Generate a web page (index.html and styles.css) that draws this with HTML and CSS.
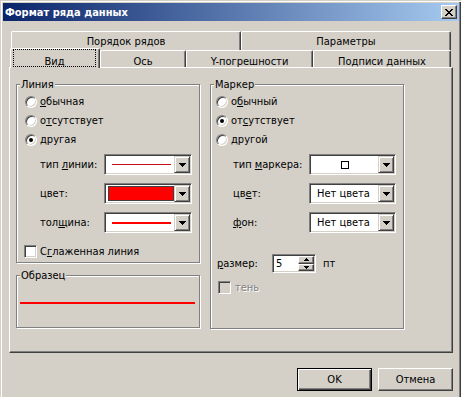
FILE: index.html
```html
<!DOCTYPE html>
<html lang="ru">
<head>
    <meta charset="UTF-8" />
    <title>Формат ряда данных</title>
    <link rel="stylesheet" href="styles.css">
</head>
<body>
    <div class="window">
        <div class="titlebar">
            <span class="title">Формат ряда данных</span>
            <div class="close-btn">
                <svg width="8" height="7" viewBox="0 0 8 7" shape-rendering="crispEdges"><path d="M0 0h2v1H0zM6 0h2v1H6zM1 1h2v1H1zM5 1h2v1H5zM2 2h4v1H2zM3 3h2v1H3zM2 4h4v1H2zM1 5h2v1H1zM5 5h2v1H5zM0 6h2v1H0zM6 6h2v1H6z" fill="#000"/></svg>
            </div>
        </div>

        <div class="client">
            <div class="tabs tabs-back">
                <div class="tab tab-order">Порядок рядов</div>
                <div class="tab tab-params">Параметры</div>
            </div>
            <div class="tabs tabs-front">
                <div class="tab tab-view active"><div class="focus">Вид</div></div>
                <div class="tab tab-axis">Ось</div>
                <div class="tab tab-errors">Y-погрешности</div>
                <div class="tab tab-labels">Подписи данных</div>
            </div>

            <div class="panel">
                <div class="column">
                    <div class="group group-line">
                        <div class="group-title">Линия</div>
                        <div class="options">
                            <div class="option"><span class="radio"></span><span><u>о</u>бычная</span></div>
                            <div class="option"><span class="radio"></span><span>о<u>т</u>сутствует</span></div>
                            <div class="option"><span class="radio checked"></span><span>другая</span></div>
                        </div>
                        <div class="fields">
                            <div class="field">
                                <span class="label">тип <u>л</u>инии:</span>
                                <div class="combo">
                                    <div class="combo-value"><div class="thin-line"></div></div>
                                    <div class="dropdown"><svg width="7" height="4" viewBox="0 0 7 4" shape-rendering="crispEdges"><path d="M0 0H7V1H6V2H5V3H4V4H3V3H2V2H1V1H0Z"/></svg></div>
                                </div>
                            </div>
                            <div class="field">
                                <span class="label">цвет:</span>
                                <div class="combo">
                                    <div class="combo-value"><div class="swatch"></div></div>
                                    <div class="dropdown"><svg width="7" height="4" viewBox="0 0 7 4" shape-rendering="crispEdges"><path d="M0 0H7V1H6V2H5V3H4V4H3V3H2V2H1V1H0Z"/></svg></div>
                                </div>
                            </div>
                            <div class="field">
                                <span class="label">тол<u>щ</u>ина:</span>
                                <div class="combo">
                                    <div class="combo-value"><div class="thick-line"></div></div>
                                    <div class="dropdown"><svg width="7" height="4" viewBox="0 0 7 4" shape-rendering="crispEdges"><path d="M0 0H7V1H6V2H5V3H4V4H3V3H2V2H1V1H0Z"/></svg></div>
                                </div>
                            </div>
                        </div>
                        <div class="check-row"><span class="checkbox"></span><span>С<u>г</u>лаженная линия</span></div>
                    </div>

                    <div class="group group-sample">
                        <div class="group-title">Образец</div>
                        <div class="sample-line"></div>
                    </div>
                </div>

                <div class="group group-marker">
                    <div class="group-title">Маркер</div>
                    <div class="options">
                        <div class="option"><span class="radio"></span><span>о<u>б</u>ычный</span></div>
                        <div class="option"><span class="radio checked"></span><span>от<u>с</u>утствует</span></div>
                        <div class="option"><span class="radio"></span><span>другой</span></div>
                    </div>
                    <div class="fields">
                        <div class="field">
                            <span class="label">тип <u>м</u>аркера:</span>
                            <div class="combo">
                                <div class="combo-value centered"><div class="marker-square"></div></div>
                                <div class="dropdown"><svg width="7" height="4" viewBox="0 0 7 4" shape-rendering="crispEdges"><path d="M0 0H7V1H6V2H5V3H4V4H3V3H2V2H1V1H0Z"/></svg></div>
                            </div>
                        </div>
                        <div class="field">
                            <span class="label">цв<u>е</u>т:</span>
                            <div class="combo">
                                <div class="combo-value">Нет цвета</div>
                                <div class="dropdown"><svg width="7" height="4" viewBox="0 0 7 4" shape-rendering="crispEdges"><path d="M0 0H7V1H6V2H5V3H4V4H3V3H2V2H1V1H0Z"/></svg></div>
                            </div>
                        </div>
                        <div class="field">
                            <span class="label"><u>ф</u>он:</span>
                            <div class="combo">
                                <div class="combo-value">Нет цвета</div>
                                <div class="dropdown"><svg width="7" height="4" viewBox="0 0 7 4" shape-rendering="crispEdges"><path d="M0 0H7V1H6V2H5V3H4V4H3V3H2V2H1V1H0Z"/></svg></div>
                            </div>
                        </div>
                    </div>
                    <div class="size-row">
                        <span class="size-label"><u>р</u>азмер:</span>
                        <div class="spin">
                            <div class="spin-value">5</div>
                            <div class="spin-buttons">
                                <div class="spin-btn"><svg width="5" height="3" viewBox="0 0 5 3" shape-rendering="crispEdges"><path d="M2 0h1v1h1v1h1v1H0V2h1V1h1z"/></svg></div>
                                <div class="spin-btn"><svg width="5" height="3" viewBox="0 0 5 3" shape-rendering="crispEdges"><path d="M0 0h5v1H4v1H3v1H2V2H1V1H0z"/></svg></div>
                            </div>
                        </div>
                        <span class="unit">пт</span>
                    </div>
                    <div class="check-row disabled"><span class="checkbox"></span><span>тень</span></div>
                </div>
            </div>

            <div class="buttons">
                <div class="btn btn-default">OK</div>
                <div class="btn">Отмена</div>
            </div>
        </div>
    </div>
</body>
</html>
```

FILE: styles.css
```css
body {
    margin: 0;
    background: #d4d0c8;
    font-family: "DejaVu Sans Condensed", "DejaVu Sans", sans-serif;
    font-size: 11px;
    color: #000;
}

.window {
    width: 461px;
    height: 397px;
    box-sizing: border-box;
    padding: 3px 2px 0 3px;
    overflow: hidden;
    box-shadow: inset 1px 1px #d4d0c8, inset 2px 2px #fff, inset -1px 0 #404040, inset -2px 0 #808080;
}

.titlebar {
    height: 18px;
    display: flex;
    align-items: center;
    justify-content: space-between;
    padding: 0 2px;
    background: linear-gradient(to right, #0a246a, #a6caf0);
}

.title {
    color: #fff;
    font-weight: bold;
}

.close-btn {
    width: 16px;
    height: 14px;
    box-sizing: border-box;
    display: flex;
    align-items: center;
    justify-content: center;
    background: #d4d0c8;
    border: 1px solid;
    border-color: #fff #404040 #404040 #fff;
    box-shadow: inset -1px -1px #808080;
}

.client {
    padding: 0 6px;
}

/* tabs */
.tabs {
    display: flex;
}

.tabs-back {
    height: 19px;
    margin: 10px 0 0 2px;
}

.tabs-front {
    height: 19px;
    margin: -2px 0 0 1px;
    align-items: flex-end;
    position: relative;
    z-index: 1;
}

.tab {
    box-sizing: border-box;
    height: 19px;
    border: 1px solid;
    border-color: #fff #404040 transparent #fff;
    border-bottom: none;
    border-radius: 2px 2px 0 0;
    box-shadow: inset -1px 0 #808080;
    background: #d4d0c8;
    text-align: center;
    line-height: 13px;
    padding-top: 3px;
}

    .tabs-front .tab {
        height: 17px;
        padding-top: 4px;
    }

    .tabs-front .tab.active {
        height: 20px;
        margin-bottom: -1px;
        padding: 0 3px 0 2px;
    }

.tab-order { width: 230px; }
.tab-params { width: 210px; }
.tab-view { width: 90px; }
.tab-axis { width: 86px; }
.tab-errors { width: 127px; }
.tab-labels { width: 138px; }

.focus {
    height: 18px;
    box-sizing: border-box;
    border: 1px dotted #000;
    padding-top: 5px;
}

/* page */
.panel {
    box-sizing: border-box;
    height: 286px;
    border: 1px solid;
    border-color: #fff #404040 #404040 #fff;
    box-shadow: inset -1px -1px #808080;
    display: flex;
    gap: 10px;
    padding: 16px 0 0 6px;
}

.column {
    width: 184px;
    display: flex;
    flex-direction: column;
    gap: 12px;
}

.group {
    box-sizing: border-box;
    border: 1px solid #808080;
    box-shadow: inset 1px 1px #fff, 1px 1px #fff;
}

.group-line { height: 179px; }
.group-sample { height: 53px; }
.group-marker { width: 194px; height: 245px; }

.group-title {
    width: fit-content;
    margin: -7px 0 0 3px;
    padding: 0 1px;
    background: #d4d0c8;
    line-height: 13px;
}

.options {
    margin-top: 1px;
    padding-left: 8px;
}

.group-marker .options {
    padding-left: 5px;
}

.option {
    height: 19px;
    display: flex;
    align-items: center;
    gap: 3px;
}

.radio {
    width: 12px;
    height: 12px;
    box-sizing: border-box;
    border-radius: 50%;
    background: #fff;
    border: 1px solid;
    border-color: #808080 #fff #fff #808080;
    box-shadow: inset 1px 1px #404040, inset -1px -1px #d4d0c8;
    display: flex;
    align-items: center;
    justify-content: center;
}

    .radio.checked::after {
        content: "";
        width: 4px;
        height: 4px;
        border-radius: 50%;
        background: #000;
    }

.fields {
    margin-top: 5px;
    padding-left: 23px;
    display: flex;
    flex-direction: column;
    gap: 8px;
}

.group-marker .fields {
    padding-left: 22px;
}

.field {
    height: 21px;
    display: flex;
    align-items: center;
}

.label {
    width: 64px;
}

.group-marker .label {
    width: 76px;
}

.combo {
    box-sizing: border-box;
    width: 88px;
    height: 21px;
    display: flex;
    padding: 1px;
    background: #fff;
    border: 1px solid;
    border-color: #808080 #fff #fff #808080;
    box-shadow: inset 1px 1px #404040, inset -1px -1px #d4d0c8;
}

.group-marker .combo {
    width: 87px;
}

.combo-value {
    flex: 1;
    display: flex;
    align-items: center;
    padding-left: 6px;
}

    .combo-value.centered {
        justify-content: center;
        padding-left: 0;
    }

.dropdown {
    width: 16px;
    box-sizing: border-box;
    background: #d4d0c8;
    border: 1px solid;
    border-color: #d4d0c8 #404040 #404040 #d4d0c8;
    box-shadow: inset 1px 1px #fff, inset -1px -1px #808080;
    display: flex;
    align-items: center;
    justify-content: center;
}

.thin-line {
    width: 59px;
    height: 1px;
    background: #c8101c;
}

.thick-line {
    width: 59px;
    height: 2px;
    background: #f00;
}

.swatch {
    width: 66px;
    height: 15px;
    box-sizing: border-box;
    margin-left: -4px;
    background: #f00;
    border: 1px solid #404040;
}

.marker-square {
    width: 8px;
    height: 8px;
    box-sizing: border-box;
    border: 1px solid #000;
}

.check-row {
    height: 13px;
    margin-top: 12px;
    padding-left: 7px;
    display: flex;
    align-items: center;
    gap: 3px;
}

.checkbox {
    width: 13px;
    height: 13px;
    box-sizing: border-box;
    background: #fff;
    border: 1px solid;
    border-color: #808080 #fff #fff #808080;
    box-shadow: inset 1px 1px #404040, inset -1px -1px #d4d0c8;
}

.check-row.disabled {
    margin-top: 8px;
    gap: 4px;
    color: #808080;
    text-shadow: 1px 1px #fff;
}

    .check-row.disabled .checkbox {
        background: #d4d0c8;
    }

.sample-line {
    height: 2px;
    margin: 20px 4px 0 3px;
    background: #f00;
}

.size-row {
    height: 19px;
    margin-top: 21px;
    padding-left: 6px;
    display: flex;
    align-items: center;
}

.size-label {
    width: 55px;
}

.spin {
    box-sizing: border-box;
    width: 44px;
    height: 19px;
    display: flex;
    padding: 1px;
    background: #fff;
    border: 1px solid;
    border-color: #808080 #fff #fff #808080;
    box-shadow: inset 1px 1px #404040, inset -1px -1px #d4d0c8;
}

.spin-value {
    flex: 1;
    padding-left: 2px;
    line-height: 15px;
}

.spin-buttons {
    width: 16px;
    display: flex;
    flex-direction: column;
}

.spin-btn {
    flex: 1;
    box-sizing: border-box;
    background: #d4d0c8;
    border: 1px solid;
    border-color: #fff #404040 #404040 #fff;
    box-shadow: inset -1px -1px #808080;
    display: flex;
    align-items: center;
    justify-content: center;
}

.unit {
    margin-left: 7px;
}

/* buttons */
.buttons {
    display: flex;
    justify-content: flex-end;
    gap: 6px;
    margin-top: 15px;
}

.btn {
    width: 75px;
    height: 23px;
    box-sizing: border-box;
    display: flex;
    align-items: center;
    justify-content: center;
    border: 1px solid;
    border-color: #fff #404040 #404040 #fff;
    box-shadow: inset -1px -1px #808080;
}

.btn-default {
    border: 1px solid #000;
    box-shadow: inset 1px 1px #fff, inset -1px -1px #404040, inset -2px -2px #808080;
}
```
